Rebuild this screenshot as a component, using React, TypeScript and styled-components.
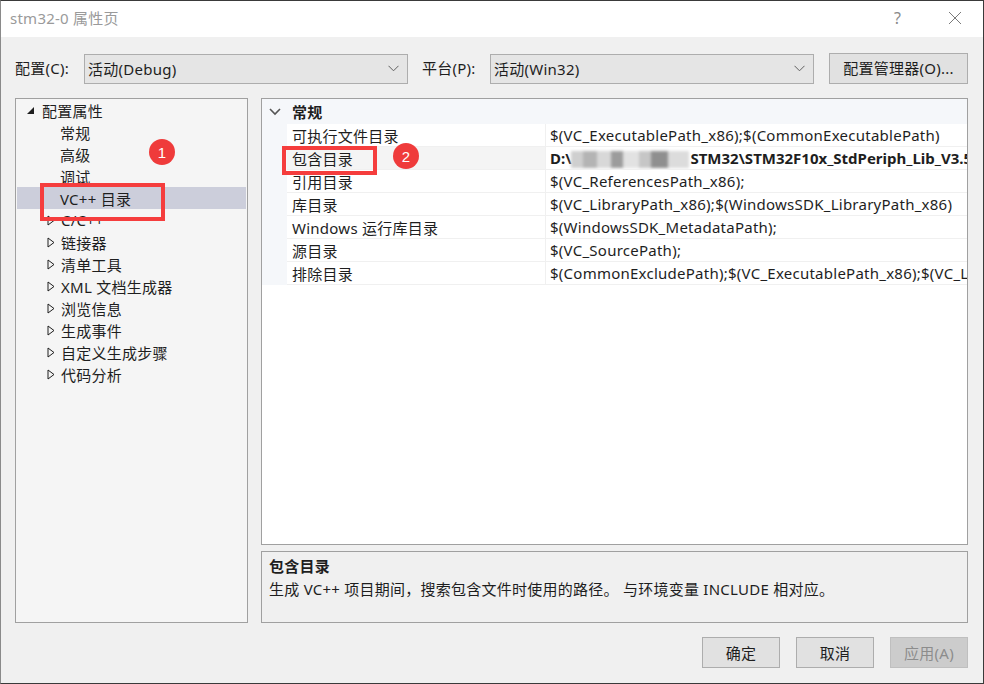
import React from "react";
import styled, { createGlobalStyle } from "styled-components";

const Global = createGlobalStyle`
  html, body { margin: 0; padding: 0; background: #ffffff; }
  body { font-family: "Noto Sans", "Noto Sans CJK SC", sans-serif; font-size: 15px; color: #1e1e1e; letter-spacing: 0.25px; }
  * { box-sizing: border-box; }
`;

const Window = styled.div`
  width: 984px;
  height: 684px;
  border: 1px solid #3a3a3a;
  border-left-color: #8a8a8a;
  display: flex;
  flex-direction: column;
  background: #f0f0f0;
  overflow: hidden;
`;

const TitleBar = styled.div`
  height: 36px;
  background: #ffffff;
  display: flex;
  align-items: center;
  padding-left: 9px;
  padding-bottom: 3px;
  flex-shrink: 0;
`;

const Title = styled.div`
  flex: 1;
  color: #9a9a9a;
  font-size: 15px;
`;

const TitleBtn = styled.div`
  width: 57px;
  height: 33px;
  display: flex;
  align-items: center;
  justify-content: center;
  color: #8a8a8a;
  font-size: 16px;
`;

const Body = styled.div`
  flex: 1;
  display: flex;
  flex-direction: column;
  padding: 15px 15px 0 14px;
`;

const TopRow = styled.div`
  height: 32px;
  display: flex;
  align-items: center;
`;

const Label = styled.div<{ $w: number }>`
  width: ${(p) => p.$w}px;
  white-space: nowrap;
  padding-bottom: 1px;
`;

const Combo = styled.div`
  width: 324px;
  height: 30px;
  margin-top: 2px;
  background: #e5e5e5;
  border: 1px solid #adadad;
  display: flex;
  align-items: center;
  padding-left: 3px;
  padding-right: 8px;
  padding-bottom: 1px;
`;

const ComboText = styled.div`
  flex: 1;
`;

const Spacer = styled.div<{ $w: number }>`
  width: ${(p) => p.$w}px;
  flex-shrink: 0;
`;

const Button = styled.div<{ $w: number; $disabled?: boolean }>`
  width: ${(p) => p.$w}px;
  height: 31px;
  background: ${(p) => (p.$disabled ? "#cccccc" : "#e1e1e1")};
  border: 1px solid ${(p) => (p.$disabled ? "#bfbfbf" : "#adadad")};
  color: ${(p) => (p.$disabled ? "#8c8c8c" : "#1e1e1e")};
  display: flex;
  align-items: center;
  justify-content: center;
  white-space: nowrap;
  padding-bottom: 1px;
`;

const Main = styled.div`
  margin-top: 14px;
  height: 524px;
  display: grid;
  grid-template-columns: 233px 1fr;
  gap: 13px;
`;

const TreePanel = styled.div`
  position: relative;
  background: #f5f5f5;
  border: 1px solid #a0a0a0;
  padding: 0 1px;
`;

const TreeRow = styled.div<{ $selected?: boolean; $indent: number }>`
  height: 22px;
  display: flex;
  align-items: center;
  padding-left: ${(p) => p.$indent}px;
  background: ${(p) => (p.$selected ? "#cccedb" : "transparent")};
  white-space: nowrap;
`;

const Arrow = styled.div`
  width: 13px;
  display: flex;
  align-items: center;
`;

const RedBox = styled.div<{ $l: number; $t: number; $w: number; $h: number }>`
  position: absolute;
  left: ${(p) => p.$l}px;
  top: ${(p) => p.$t}px;
  width: ${(p) => p.$w}px;
  height: ${(p) => p.$h}px;
  border: 4px solid #f53d3d;
  pointer-events: none;
`;

const Badge = styled.div<{ $l: number; $t: number }>`
  position: absolute;
  left: ${(p) => p.$l}px;
  top: ${(p) => p.$t}px;
  width: 26px;
  height: 26px;
  border-radius: 50%;
  background: #ef3b3b;
  color: #ffffff;
  font-size: 15px;
  display: flex;
  align-items: center;
  justify-content: center;
  font-family: "Liberation Sans", "Noto Sans", sans-serif;
`;

const RightCol = styled.div`
  display: flex;
  flex-direction: column;
  gap: 6px;
  min-width: 0;
`;

const GridPanel = styled.div`
  position: relative;
  height: 447px;
  background: #ffffff;
  border: 1px solid #a0a0a0;
  overflow: hidden;
`;

const GroupHeader = styled.div`
  height: 25px;
  background: #f5f7fa;
  display: flex;
  align-items: center;
  font-weight: bold;
`;

const Gutter = styled.div`
  width: 25px;
  flex-shrink: 0;
  display: flex;
  align-items: center;
  justify-content: center;
  align-self: stretch;
  background: #f5f7fa;
`;

const PropRow = styled.div`
  height: 23px;
  display: flex;
`;

const NameCell = styled.div<{ $selected?: boolean }>`
  width: 259px;
  flex-shrink: 0;
  padding-left: 5px;
  display: flex;
  align-items: center;
  border-bottom: 1px solid #f0f0f0;
  border-right: 1px solid #f0f0f0;
  background: ${(p) => (p.$selected ? "#f4f4f4" : "#ffffff")};
  white-space: nowrap;
`;

const ValueCell = styled.div<{ $bold?: boolean }>`
  flex: 1;
  min-width: 0;
  padding-left: 4px;
  line-height: 22px;
  border-bottom: 1px solid #f0f0f0;
  white-space: nowrap;
  overflow: hidden;
  font-weight: ${(p) => (p.$bold ? "bold" : "normal")};
  letter-spacing: ${(p) => (p.$bold ? "0" : "0.25px")};
`;

const Blurred = styled.span`
  display: inline-block;
  width: 118px;
  height: 17px;
  margin-right: 1px;
  background: linear-gradient(
    90deg,
    #cfcfcf 0 10%,
    #b4b4b4 10% 22%,
    #d8d8d8 22% 34%,
    #9c9c9c 34% 44%,
    #e2e2e2 44% 58%,
    #c6c6c6 58% 68%,
    #8f8f8f 68% 82%,
    #dcdcdc 82% 100%
  );
  filter: blur(1.5px);
  vertical-align: middle;
`;

const DescPanel = styled.div`
  height: 72px;
  background: #f0f0f0;
  border: 1px solid #a0a0a0;
  padding: 2px 7px;
  display: flex;
  flex-direction: column;
`;

const DescTitle = styled.div`
  font-weight: bold;
  height: 23px;
  display: flex;
  align-items: center;
`;

const DescText = styled.div`
  height: 23px;
  display: flex;
  align-items: center;
  white-space: nowrap;
`;

const ButtonRow = styled.div`
  margin-top: 15px;
  display: flex;
  justify-content: flex-end;
  gap: 16px;
`;

const Chevron = () => (
  <svg width="11" height="7" viewBox="0 0 11 7">
    <path d="M0.5 0.8 L5.5 5.8 L10.5 0.8" fill="none" stroke="#606060" strokeWidth="1" />
  </svg>
);

const Expanded = () => (
  <svg width="9" height="9" viewBox="0 0 9 9">
    <path d="M8 1 L8 8 L1 8 Z" fill="#1e1e1e" />
  </svg>
);

const Collapsed = () => (
  <svg width="8" height="11" viewBox="0 0 8 11">
    <path d="M1 1 L7 5.5 L1 10 Z" fill="none" stroke="#1e1e1e" strokeWidth="1" />
  </svg>
);

const GroupChevron = () => (
  <svg width="12" height="8" viewBox="0 0 12 8">
    <path d="M1 1 L6 6 L11 1" fill="none" stroke="#555" strokeWidth="1.6" />
  </svg>
);

const CloseIcon = () => (
  <svg width="14" height="14" viewBox="0 0 14 14">
    <path d="M1 1 L13 13 M13 1 L1 13" stroke="#7a7a7a" strokeWidth="1" />
  </svg>
);

const children = ["常规", "高级", "调试", "VC++ 目录"];
const collapsed = ["C/C++", "链接器", "清单工具", "XML 文档生成器", "浏览信息", "生成事件", "自定义生成步骤", "代码分析"];

const props: { name: string; value?: string; special?: boolean }[] = [
  { name: "可执行文件目录", value: "$(VC_ExecutablePath_x86);$(CommonExecutablePath)" },
  { name: "包含目录", special: true },
  { name: "引用目录", value: "$(VC_ReferencesPath_x86);" },
  { name: "库目录", value: "$(VC_LibraryPath_x86);$(WindowsSDK_LibraryPath_x86)" },
  { name: "Windows 运行库目录", value: "$(WindowsSDK_MetadataPath);" },
  { name: "源目录", value: "$(VC_SourcePath);" },
  { name: "排除目录", value: "$(CommonExcludePath);$(VC_ExecutablePath_x86);$(VC_LibraryPath_x86);" },
];

export default function App() {
  return (
    <>
      <Global />
      <Window>
        <TitleBar>
          <Title>stm32-0 属性页</Title>
          <TitleBtn>?</TitleBtn>
          <TitleBtn>
            <CloseIcon />
          </TitleBtn>
        </TitleBar>
        <Body>
          <TopRow>
            <Label $w={69}>配置(C):</Label>
            <Combo>
              <ComboText>活动(Debug)</ComboText>
              <Chevron />
            </Combo>
            <Spacer $w={14} />
            <Label $w={68}>平台(P):</Label>
            <Combo>
              <ComboText>活动(Win32)</ComboText>
              <Chevron />
            </Combo>
            <Spacer $w={15} />
            <Button $w={139}>配置管理器(O)...</Button>
          </TopRow>
          <Main>
            <TreePanel>
              <TreeRow $indent={9}>
                <Arrow>
                  <Expanded />
                </Arrow>
                <span style={{ marginLeft: 3 }}>配置属性</span>
              </TreeRow>
              {children.map((c) => (
                <TreeRow key={c} $indent={43} $selected={c === "VC++ 目录"}>
                  {c}
                </TreeRow>
              ))}
              {collapsed.map((c) => (
                <TreeRow key={c} $indent={30}>
                  <Arrow>
                    <Collapsed />
                  </Arrow>
                  <span style={{ marginLeft: 1 }}>{c}</span>
                </TreeRow>
              ))}
              <RedBox $l={24} $t={84} $w={125} $h={38} />
              <Badge $l={133} $t={40}>1</Badge>
            </TreePanel>
            <RightCol>
              <GridPanel>
                <GroupHeader>
                  <Gutter>
                    <GroupChevron />
                  </Gutter>
                  <span style={{ marginLeft: 5 }}>常规</span>
                </GroupHeader>
                {props.map((p) => (
                  <PropRow key={p.name}>
                    <Gutter />
                    <NameCell $selected={p.special}>{p.name}</NameCell>
                    <ValueCell $bold={p.special}>
                      {p.special ? (
                        <>
                          D:\<Blurred />STM32\STM32F10x_StdPeriph_Lib_V3.5.0\Libraries
                        </>
                      ) : (
                        p.value
                      )}
                    </ValueCell>
                  </PropRow>
                ))}
                <RedBox $l={20} $t={47} $w={95} $h={29} />
                <Badge $l={131} $t={44}>2</Badge>
              </GridPanel>
              <DescPanel>
                <DescTitle>包含目录</DescTitle>
                <DescText>生成 VC++ 项目期间，搜索包含文件时使用的路径。 与环境变量 INCLUDE 相对应。</DescText>
              </DescPanel>
            </RightCol>
          </Main>
          <ButtonRow>
            <Button $w={78}>确定</Button>
            <Button $w={78}>取消</Button>
            <Button $w={78} $disabled>
              应用(A)
            </Button>
          </ButtonRow>
        </Body>
      </Window>
    </>
  );
}
